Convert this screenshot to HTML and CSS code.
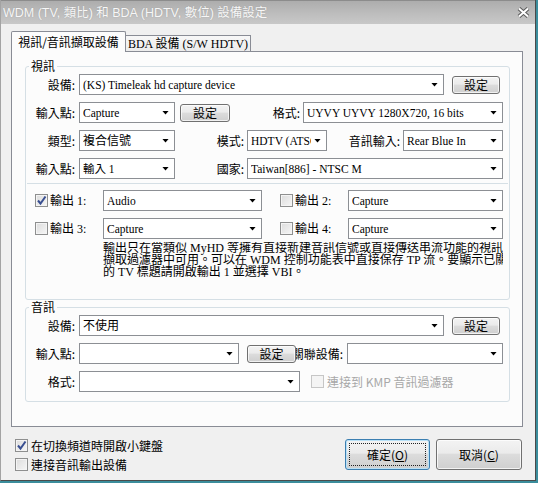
FILE: index.html
```html
<!DOCTYPE html>
<html lang="zh-Hant">
<head>
<meta charset="utf-8">
<title>WDM 設備設定</title>
<link rel="stylesheet" href="styles.css">
</head>
<body>
<div class="window">
  <div class="titlebar">
    <span class="title">WDM (TV, 類比) 和 BDA (HDTV, 數位) 設備設定</span>
    <svg class="close" viewBox="0 0 13 11" width="13" height="11">
      <path d="M2 1.5 L11 9.5 M11 1.5 L2 9.5" stroke="#5c5c5c" stroke-width="4" fill="none"/>
      <path d="M2 1.5 L11 9.5 M11 1.5 L2 9.5" stroke="#ffffff" stroke-width="2" fill="none"/>
    </svg>
  </div>
  <div class="client">
    <div class="tabs">
      <div class="tab active">視訊/音訊擷取設備</div>
      <div class="tab inactive">BDA 設備 (S/W HDTV)</div>
    </div>
    <div class="panel">
      <fieldset class="group video">
        <legend>視訊</legend>
        <div class="rows">
          <div class="row">
            <span class="lbl">設備:</span>
            <div class="combo w365"><span class="v">(KS) Timeleak hd capture device</span><span class="arr"></span></div>
            <div class="btn w48 ml8">設定</div>
          </div>
          <div class="row">
            <span class="lbl">輸入點:</span>
            <div class="combo w96"><span class="v">Capture</span><span class="arr"></span></div>
            <div class="btn w50 ml5">設定</div>
            <span class="lbl w70">格式:</span>
            <div class="combo w200"><span class="v">UYVY UYVY 1280X720, 16 bits</span><span class="arr"></span></div>
          </div>
          <div class="row">
            <span class="lbl">類型:</span>
            <div class="combo w96"><span class="v cjk">複合信號</span><span class="arr"></span></div>
            <span class="lbl w68">模式:</span>
            <div class="combo w80"><span class="v">HDTV (ATSC)</span><span class="arr"></span></div>
            <span class="lbl w72">音訊輸入:</span>
            <div class="combo w100"><span class="v">Rear Blue In</span><span class="arr"></span></div>
          </div>
          <div class="row">
            <span class="lbl">輸入點:</span>
            <div class="combo w96"><span class="v">輸入 1</span><span class="arr"></span></div>
            <span class="lbl w68">國家:</span>
            <div class="combo w256"><span class="v">Taiwan[886] - NTSC M</span><span class="arr"></span></div>
          </div>
        </div>
        <div class="sep"></div>
        <div class="outs">
          <div class="out">
            <label class="ochk"><span class="chk on"><svg viewBox="0 0 11 11" width="11" height="11"><path d="M2 5.5 L4.5 8.5 L9.5 1.5" stroke="#394f91" stroke-width="2" fill="none"/></svg></span><span class="otxt">輸出 1:</span></label>
            <div class="combo w159"><span class="v">Audio</span><span class="arr"></span></div>
            <label class="ochk ml18"><span class="chk"></span><span class="otxt">輸出 2:</span></label>
            <div class="combo w155"><span class="v">Capture</span><span class="arr"></span></div>
          </div>
          <div class="out">
            <label class="ochk"><span class="chk"></span><span class="otxt">輸出 3:</span></label>
            <div class="combo w159"><span class="v">Capture</span><span class="arr"></span></div>
            <label class="ochk ml18"><span class="chk"></span><span class="otxt">輸出 4:</span></label>
            <div class="combo w155"><span class="v">Capture</span><span class="arr"></span></div>
          </div>
        </div>
        <p class="note">輸出只在當類似 MyHD 等擁有直接新建音訊信號或直接傳送串流功能的視訊<br>擷取過濾器中可用。可以在 WDM 控制功能表中直接保存 TP 流。要顯示已關閉<br>的 TV 標題請開啟輸出 1 並選擇 VBI。</p>
      </fieldset>
      <fieldset class="group audio">
        <legend>音訊</legend>
        <div class="rows">
          <div class="row">
            <span class="lbl">設備:</span>
            <div class="combo w365"><span class="v cjk">不使用</span><span class="arr"></span></div>
            <div class="btn w48 ml8">設定</div>
          </div>
          <div class="row">
            <span class="lbl">輸入點:</span>
            <div class="combo w160"><span class="v"></span><span class="arr"></span></div>
            <div class="btn w49 ml8">設定</div>
            <span class="lbl clip"><span>關聯設備:</span></span>
            <div class="combo w156 ml2"><span class="v"></span><span class="arr"></span></div>
          </div>
          <div class="row">
            <span class="lbl">格式:</span>
            <div class="combo w221"><span class="v"></span><span class="arr"></span></div>
            <label class="dchk"><span class="chk dis"></span><span>連接到 KMP 音訊過濾器</span></label>
          </div>
        </div>
      </fieldset>
    </div>
    <div class="footer">
      <div class="checks">
        <label class="fchk"><span class="chk on"><svg viewBox="0 0 11 11" width="11" height="11"><path d="M2 5.5 L4.5 8.5 L9.5 1.5" stroke="#394f91" stroke-width="2" fill="none"/></svg></span><span>在切換頻道時開啟小鍵盤</span></label>
        <label class="fchk"><span class="chk"></span><span>連接音訊輸出設備</span></label>
      </div>
      <div class="buttons">
        <div class="dlg default"><span class="focus">確定(<u>O</u>)</span></div>
        <div class="dlg w86"><span class="nofocus">取消(<u>C</u>)</span></div>
      </div>
    </div>
  </div>
</div>
</body>
</html>
```
FILE: styles.css
```css
* { box-sizing: border-box; }
html, body { margin: 0; padding: 0; }
body {
  width: 538px;
  height: 483px;
  overflow: hidden;
  background: #3b8d9c;
  font-family: "Noto Sans CJK TC", "Liberation Sans", sans-serif;
  font-size: 12px;
  color: #000;
}
.window {
  width: 536px;
  height: 481px;
  background: #f0f0f0;
  border-left: 1px solid #a3a3a3;
  border-right: 1px solid #4a4a4a;
  border-bottom: 1px solid #4a4a4a;
  display: flex;
  flex-direction: column;
}
.titlebar {
  height: 24px;
  flex: none;
  background: linear-gradient(#adadad, #bdbdbd 55%, #c8c8c8);
  border-top: 1px solid #8c8c8c;
  display: flex;
  align-items: center;
  justify-content: space-between;
  padding: 0 5px 0 2px;
}
.title {
  color: #f7f7f7;
  font-family: "Liberation Sans", "Noto Sans CJK TC", sans-serif;
  font-size: 12.5px;
  line-height: 14px;
  text-shadow: 0 0 1px rgba(90, 90, 90, 0.35);
}
.close { display: block; }

.client {
  flex: 1;
  display: flex;
  flex-direction: column;
  padding: 7px 12px 0 10px;
}
.tabs {
  position: relative;
  z-index: 1;
  display: flex;
  align-items: flex-end;
  height: 21px;
  margin-bottom: -1px;
}
.tab {
  border: 1px solid #898c95;
  border-bottom: none;
  display: flex;
  align-items: center;
  justify-content: center;
  white-space: nowrap;
  line-height: 14px;
}
.tab.active {
  width: 115px;
  height: 21px;
  background: #fcfcfc;
  border-radius: 2px 2px 0 0;
  padding-bottom: 1px;
}
.tab.inactive {
  width: 126px;
  height: 16px;
  margin-left: -1px;
  margin-bottom: 1px;
  background: linear-gradient(#f7f7f7, #ececec);
  font-family: "Liberation Serif", "Noto Sans CJK TC", serif;
  font-size: 12px;
}
.panel {
  width: 512px;
  height: 376px;
  flex: none;
  border: 1px solid #898c95;
  background: #fcfcfc;
  padding: 7px 0 0 13px;
}
fieldset.group {
  margin: 0;
  padding: 1px 0 0 0;
  border: 1px solid #d5dfe5;
  border-radius: 3px;
  width: 485px;
  min-width: 0;
}
legend {
  margin-left: 3px;
  padding: 0 2px;
  line-height: 14px;
  font-size: 12px;
}
.video { height: 241px; }
.audio { height: 102px; margin-top: 12px; padding-top: 2px; }

.rows {
  display: flex;
  flex-direction: column;
  gap: 7px;
}
.row {
  display: flex;
  align-items: center;
  height: 21px;
}
.lbl {
  width: 49px;
  flex: none;
  text-align: right;
  margin-right: 4px;
  white-space: nowrap;
  line-height: 14px;
}
.lbl.w70 { width: 70px; margin-right: 3px; }
.lbl.w68 { width: 69px; margin-right: 3px; }
.lbl.w72 { width: 73px; margin-right: 3px; }
.lbl.clip {
  display: flex;
  justify-content: flex-end;
  overflow: hidden;
  margin-right: 0;
  padding-right: 2px;
}
.lbl.clip span { flex: none; }

.combo {
  flex: none;
  height: 21px;
  border: 1px solid #8c8f94;
  background: #fff;
  display: flex;
  align-items: center;
  padding: 0 5px 0 3px;
  font-family: "Liberation Serif", "Noto Sans CJK TC", serif;
  font-size: 11.5px;
  line-height: 14px;
}
.combo .v {
  flex: 1;
  min-width: 0;
  white-space: nowrap;
  overflow: hidden;
}
.combo .v.cjk { font-size: 12px; }
.combo .arr {
  flex: none;
  width: 7px;
  height: 4px;
  margin-left: 3px;
  background: #000;
  clip-path: polygon(0 0, 100% 0, 50% 100%);
}
.w80 { width: 80px; }
.w96 { width: 96px; }
.w100 { width: 100px; }
.w155 { width: 155px; }
.w156 { width: 156px; }
.w159 { width: 159px; }
.w160 { width: 160px; }
.w200 { width: 200px; }
.w221 { width: 221px; }
.w256 { width: 256px; }
.w365 { width: 365px; }
.w48 { width: 48px; }
.w49 { width: 49px; }
.w50 { width: 50px; }
.ml2 { margin-left: 2px; }
.ml5 { margin-left: 5px; }
.ml8 { margin-left: 8px; }
.ml18 { margin-left: 18px; }

.btn {
  flex: none;
  height: 18px;
  border: 1px solid #707070;
  border-radius: 3px;
  background: linear-gradient(#f3f3f3, #ebebeb 45%, #dcdcdc 50%, #cfcfcf);
  box-shadow: inset 0 0 0 1px rgba(255, 255, 255, 0.7);
  text-align: center;
  line-height: 15px;
  font-size: 12px;
}

.sep {
  height: 1px;
  background: #d5dfe5;
  margin: 4px 1px 0;
}
.outs {
  display: flex;
  flex-direction: column;
  gap: 7px;
  margin-top: 6px;
}
.out {
  display: flex;
  align-items: center;
  height: 21px;
  padding-left: 9px;
}
.ochk {
  width: 68px;
  flex: none;
  display: flex;
  align-items: center;
}
.otxt {
  margin-left: 2px;
  font-family: "Liberation Serif", "Noto Sans CJK TC", serif;
  font-size: 12px;
  line-height: 14px;
}
.chk {
  width: 13px;
  height: 13px;
  flex: none;
  border: 1px solid #8e8f8f;
  background: linear-gradient(135deg, #dcdcdc, #f6f6f6);
  box-shadow: inset 0 0 0 1px #f4f4f4;
  display: flex;
  align-items: center;
  justify-content: center;
}
.chk svg { display: block; }
.chk.dis {
  border-color: #c6c6c6;
  background: #f4f4f4;
  box-shadow: none;
}
.note {
  margin: 3px 0 0 77px;
  width: 400px;
  overflow: hidden;
  white-space: nowrap;
  font-family: "Liberation Serif", "Noto Sans CJK TC", serif;
  font-size: 12px;
  line-height: 12px;
}
.dchk {
  display: flex;
  align-items: center;
  margin-left: 11px;
  color: #a8a8a8;
  line-height: 14px;
}
.dchk .chk { margin-right: 3px; }

.footer {
  display: flex;
  justify-content: space-between;
  align-items: flex-start;
  margin-top: 12px;
  padding-left: 4px;
}
.checks {
  display: flex;
  flex-direction: column;
  gap: 6px;
}
.fchk {
  display: flex;
  align-items: center;
  height: 13px;
  line-height: 14px;
}
.fchk .chk { margin-right: 3px; }
.buttons {
  display: flex;
  gap: 6px;
  margin-right: 1px;
}
.dlg {
  width: 85px;
  height: 31px;
  border: 1px solid #707070;
  border-radius: 3px;
  background: linear-gradient(#f3f3f3, #ebebeb 45%, #dcdcdc 50%, #cfcfcf);
  box-shadow: inset 0 0 0 1px rgba(255, 255, 255, 0.75);
  display: flex;
  padding: 3px;
}
.dlg.w86 { width: 86px; }
.dlg.default {
  border-color: #3c7fb1;
  box-shadow: inset 0 0 0 1px #b9e1f7;
}
.focus, .nofocus {
  flex: 1;
  display: flex;
  align-items: center;
  justify-content: center;
  line-height: 14px;
  font-size: 12px;
}
.focus { border: 1px dotted #222; }
.nofocus { border: 1px solid transparent; }
u { text-decoration: underline; text-underline-offset: 1px; }
```
